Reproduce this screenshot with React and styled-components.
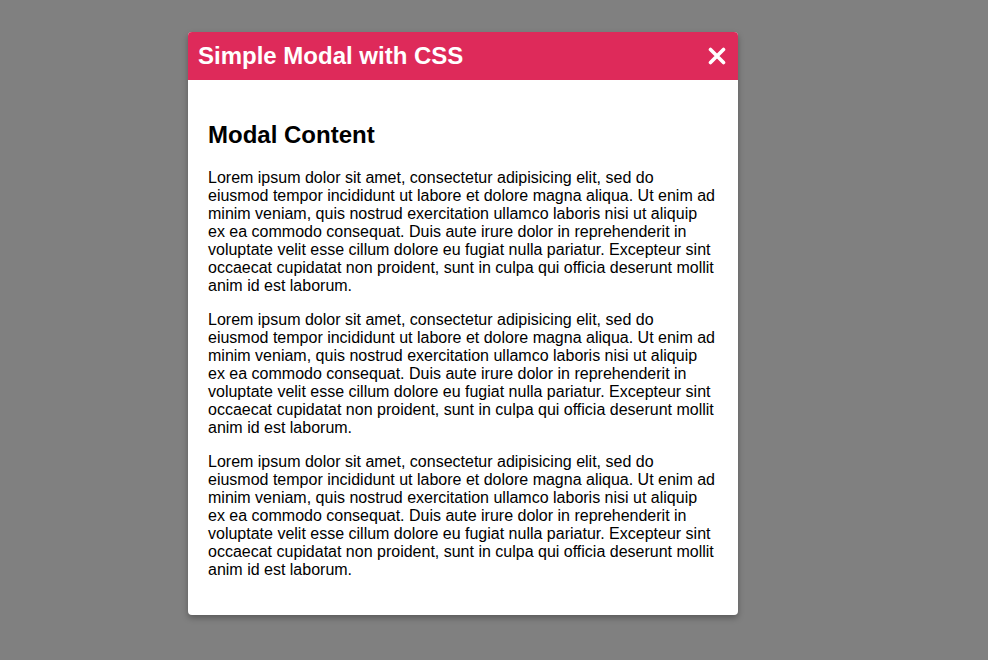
import React from 'react';
import styled, { createGlobalStyle } from 'styled-components';

const GlobalStyle = createGlobalStyle`
  html, body {
    margin: 0;
    padding: 0;
    background: #808080;
  }
  body {
    font-family: "Liberation Sans", Arial, sans-serif;
    color: #000;
  }
`

const Backdrop = styled.div`
  min-height: 660px;
  box-sizing: border-box;
  padding: 32px 0 0 188px;
  display: flex;
  align-items: flex-start;
`

const Modal = styled.div`
  width: 550px;
  background: #fff;
  border-radius: 4px;
  overflow: hidden;
  box-shadow: 0 3px 6px rgba(0, 0, 0, 0.3);
`

const Header = styled.div`
  height: 48px;
  background: #de2a5a;
  display: flex;
  align-items: center;
  justify-content: space-between;
  padding: 0 11px 0 10px;
  .title {
    color: #fff;
    font-size: 24px;
    font-weight: bold;
  }
`

const CloseButton = styled.button`
  border: none;
  background: none;
  padding: 0;
  width: 20px;
  height: 20px;
  display: flex;
  align-items: center;
  justify-content: center;
  cursor: pointer;
`

const Body = styled.div`
  padding: 20px;
  h2 {
    font-size: 24px;
    font-weight: bold;
    margin: 20px 0;
    line-height: 29px;
  }
  p {
    font-size: 16px;
    line-height: 18px;
    margin: 16px 0;
  }
`

const lorem = 'Lorem ipsum dolor sit amet, consectetur adipisicing elit, sed do eiusmod tempor incididunt ut labore et dolore magna aliqua. Ut enim ad minim veniam, quis nostrud exercitation ullamco laboris nisi ut aliquip ex ea commodo consequat. Duis aute irure dolor in reprehenderit in voluptate velit esse cillum dolore eu fugiat nulla pariatur. Excepteur sint occaecat cupidatat non proident, sunt in culpa qui officia deserunt mollit anim id est laborum.'

export default function App() {
  return (
    <Backdrop>
      <GlobalStyle />
      <Modal>
        <Header>
          <span className='title'>Simple Modal with CSS</span>
          <CloseButton aria-label='close'>
            <svg width='18' height='18' viewBox='0 0 18 18'>
              <path d='M2.5 2.5 L15.5 15.5 M15.5 2.5 L2.5 15.5' stroke='#fff' strokeWidth='3.6' strokeLinecap='round' />
            </svg>
          </CloseButton>
        </Header>
        <Body>
          <h2>Modal Content</h2>
          <p>{lorem}</p>
          <p>{lorem}</p>
          <p>{lorem}</p>
        </Body>
      </Modal>
    </Backdrop>
  );
}
